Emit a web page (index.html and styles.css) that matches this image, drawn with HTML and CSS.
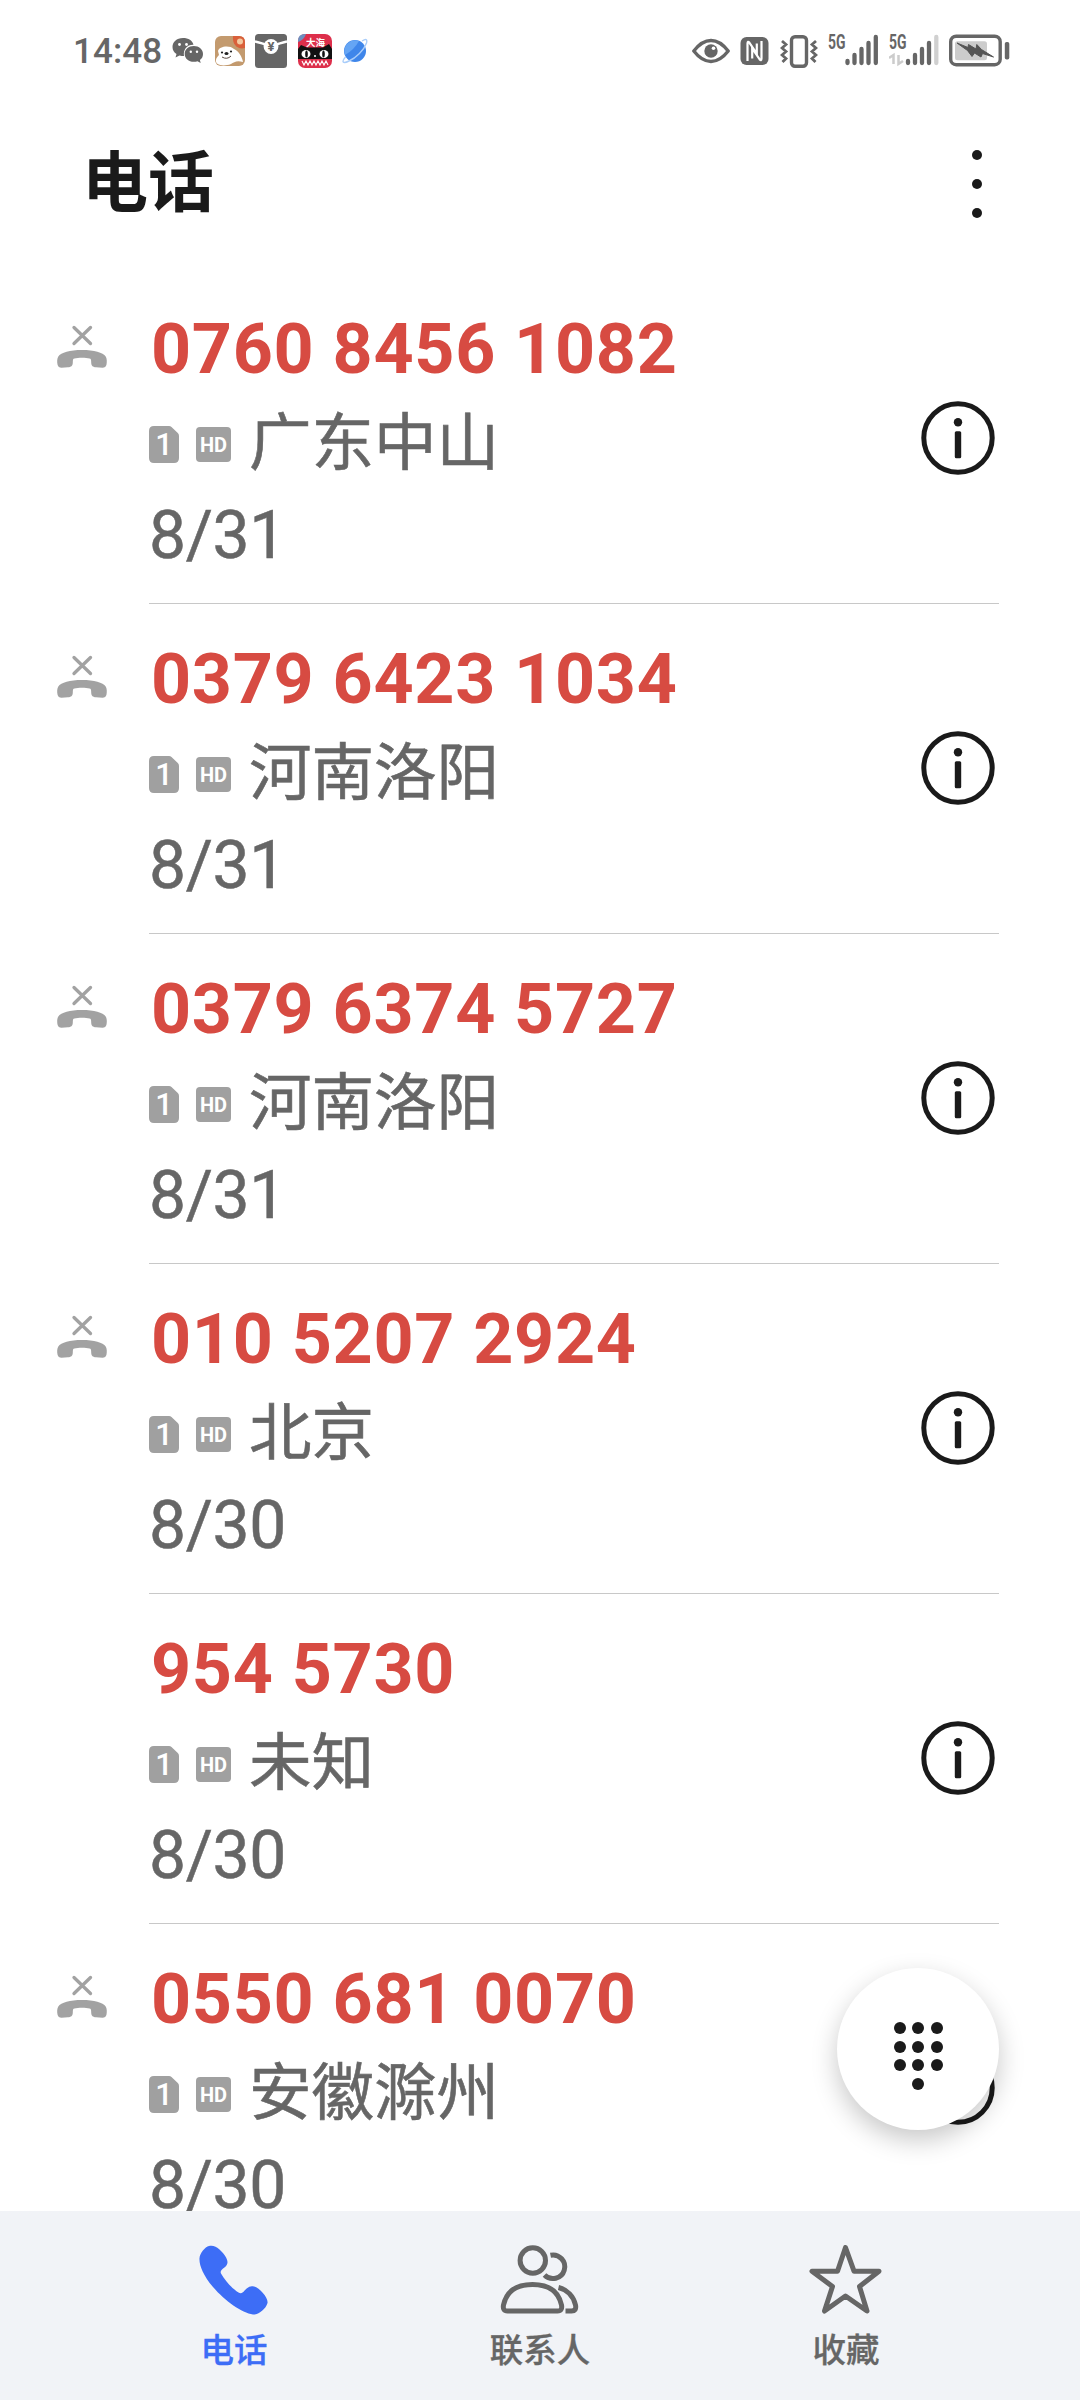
FILE: index.html
```html
<!DOCTYPE html>
<html lang="zh-CN">
<head>
    <meta charset="UTF-8">
    <title>电话</title>
    <link rel="stylesheet" href="styles.css">
</head>
<body>
    <!-- shared icons -->
    <svg class="defs" width="0" height="0">
        <symbol id="missed" viewBox="0 0 50 44">
            <path d="M17 2.500 L33.500 18.500 M33.500 2.500 L17 18.500" fill="none" stroke="#a2a2a2" stroke-width="3.300" stroke-linecap="round"/>
            <path d="M25 25 C13 25 4 27.500 1.300 31.500 C0 33.500 0 37 .5 39.500 C1 42 2.500 42.700 4.500 42.700 L11 42.300 C14.500 42 15.800 40.500 15.800 37.500 C15.800 34.500 16 33.800 17.500 33.500 C21 32.600 29 32.600 32.500 33.500 C34 33.800 34.200 34.500 34.200 37.500 C34.200 40.500 35.500 42 39 42.300 L45.500 42.700 C47.500 42.700 49 42 49.500 39.500 C50 37 50 33.500 48.700 31.500 C46 27.500 37 25 25 25 Z" fill="#a2a2a2"/>
        </symbol>
        <symbol id="sim" viewBox="0 0 30 37">
            <path d="M5 0 H20 Q21.500 0 22.500 1 L28.800 7 Q30 8.200 30 10 V32 Q30 37 25 37 H5 Q0 37 0 32 V5 Q0 0 5 0 Z" fill="#a0a0a0"/>
        </symbol>
        <symbol id="info" viewBox="0 0 74 74">
            <circle cx="37" cy="37" r="34.200" fill="none" stroke="#1a1a1a" stroke-width="5"/>
            <circle cx="37" cy="21.300" r="4.200" fill="#1a1a1a"/>
            <rect x="33.800" y="30.300" width="6.400" height="27" rx="1.500" fill="#1a1a1a"/>
        </symbol>
    </svg>

    <div class="screen">
        <div class="status">
            <span class="time">14:48</span>
            <div class="apps">
                <!-- wechat -->
                <svg width="32" height="36" viewBox="0 0 32 36">
                    <path d="M11 5 C4.500 5 .5 9 .5 14 C.5 17 2 19.500 4.500 21 L3.500 24.500 L7.500 22.500 C9 23 10.500 23 12 23 C11 16.500 15 11.500 21.500 11.700 C20.500 7.500 16.500 5 11 5 Z" fill="#666"/>
                    <path d="M21.800 13 C16.500 13 12.700 16.500 12.700 21 C12.700 25.500 16.500 28.800 21.800 28.800 C23 28.800 24.500 28.600 25.500 28.200 L28.700 30 L27.900 27 C30 25.500 31 23.500 31 21 C31 16.500 27 13 21.800 13 Z" fill="#666"/>
                    <circle cx="7.500" cy="11.500" r="1.400" fill="#fff"/>
                    <circle cx="14.500" cy="11.500" r="1.400" fill="#fff"/>
                    <circle cx="18.800" cy="18.800" r="1.200" fill="#fff"/>
                    <circle cx="25" cy="18.800" r="1.200" fill="#fff"/>
                </svg>
                <!-- puppy -->
                <svg width="30" height="36" viewBox="0 0 30 36">
                    <rect y="3" width="30" height="30" rx="6" fill="#c39a6e"/>
                    <path d="M18 3 H24 Q30 3 30 9 V15 C23 17 17 12 18 3 Z" fill="#d9603a"/>
                    <circle cx="25" cy="8.500" r="3" fill="#f3c9a0"/>
                    <path d="M3 18 C4 13 15 12 19 16 C24 18 27 24 28 29 C22 27 19 29 16 31 C8 34 0 32 1 27 C1 25 3 23 4 22 Z" fill="#fff"/>
                    <circle cx="7" cy="19.500" r="1.100" fill="#222"/>
                    <circle cx="16" cy="18.500" r="1.100" fill="#222"/>
                    <ellipse cx="11.500" cy="20.500" rx="2" ry="1.500" fill="#222"/>
                    <path d="M7 24 Q12 27 16 23" fill="none" stroke="#5b4a42"/>
                </svg>
                <!-- wallet -->
                <svg width="32" height="36" viewBox="0 0 32 36">
                    <rect y="1" width="32" height="34" rx="3.500" fill="#666"/>
                    <path d="M0 8.500 Q8 10.500 12 12 M32 8.500 Q24 10.500 20 12" fill="none" stroke="#fff" stroke-width="2.400"/>
                    <circle cx="16" cy="13.500" r="7.400" fill="#fff"/>
                    <text class="yen" x="16" y="18.200" text-anchor="middle">¥</text>
                </svg>
                <!-- black cat on red -->
                <svg width="34" height="36" viewBox="0 0 34 36">
                    <rect y="1" width="34" height="34" rx="7" fill="#dd2f4b"/>
                    <path d="M0 8 Q0 1 7 1 L8 1 Q6 7 0 9 Z" fill="#6c8fc0"/>
                    <path d="M0 16 L3 12 L9 14.500 H25 L31 11 L34 16 V26 H0 Z" fill="#111"/>
                    <ellipse cx="8" cy="21" rx="4.500" ry="4" fill="#fff"/>
                    <ellipse cx="26" cy="21" rx="4.500" ry="4" fill="#fff"/>
                    <ellipse cx="8.500" cy="21" rx="1.300" ry="3.500" fill="#111"/>
                    <ellipse cx="25.500" cy="21" rx="1.300" ry="3.500" fill="#111"/>
                    <circle cx="17" cy="23" r="1" fill="#fff"/>
                    <text class="tiny" x="17.500" y="12.800" text-anchor="middle">大海</text>
                    <path d="M4 28 l2 4 l2-4 l2 4 l2-4 l2 4 l2-4 l2 4 l2-4 l2 4 l2-4 l2 4 l2-4 l2 4" fill="none" stroke="#fff" stroke-width="1.100"/>
                </svg>
                <!-- browser planet -->
                <svg width="26" height="36" viewBox="0 0 26 36">
                    <circle cx="13" cy="18" r="11" fill="#3f86ea"/>
                    <path d="M3 22 A11 11 0 0 1 17 8 Q12 17 3 22Z" fill="#65a5f4"/>
                    <path d="M3.500 24 C-1 29 1 31 7 28 C14 25 22 17 24.500 10 C25.500 6 24 5.500 20 8" fill="none" stroke="#a9cdfa" stroke-width="1.400"/>
                </svg>
            </div>

            <div class="system">
                <!-- eye -->
                <svg width="38" height="36" viewBox="0 0 38 36">
                    <path d="M1.800 18 C8 10 13 7.500 19 7.500 C25 7.500 30 10 36.200 18 C30 26 25 28.500 19 28.500 C13 28.500 8 26 1.800 18 Z" fill="none" stroke="#666" stroke-width="3.400" stroke-linejoin="round"/>
                    <circle cx="19" cy="18" r="6.700" fill="#666"/>
                    <circle cx="21.500" cy="15.300" r="1.800" fill="#fff"/>
                </svg>
                <!-- nfc -->
                <svg width="29" height="36" viewBox="0 0 29 36">
                    <rect x=".5" y="4" width="28" height="28" rx="6" fill="#666"/>
                    <path d="M7.500 28 V10.500 Q7.500 7.500 9.500 9.800 L16.800 20.500 V10.500" fill="none" stroke="#fff" stroke-width="2.200"/>
                    <path d="M21.500 8 V25.500 Q21.500 28.500 19.500 26.200 L12.200 15.500 V25.500" fill="none" stroke="#fff" stroke-width="2.200"/>
                </svg>
                <!-- vibrate -->
                <svg width="38" height="36" viewBox="0 0 38 36">
                    <rect x="11.500" y="3.700" width="15" height="29.500" rx="3.500" fill="none" stroke="#666" stroke-width="3.400"/>
                    <path d="M2 8 L6 11.500 L2 15 L6 18.500 L2 22 L6 25.500 L2.500 29 M36 8 L32 11.500 L36 15 L32 18.500 L36 22 L32 25.500 L35.500 29" fill="none" stroke="#666" stroke-width="2.800"/>
                </svg>
                <!-- signal, sim 1 -->
                <svg width="50" height="36" viewBox="0 0 50 36">
                    <text class="net" x="0" y="15.500" textLength="17.500" lengthAdjust="spacingAndGlyphs">5G</text>
                    <path d="M19.500 28 V30 M26.500 22 V30 M33.500 16 V30 M40.500 10 V30 M47.800 4 V30" stroke="#666" stroke-width="4.300" stroke-linecap="round"/>
                </svg>
                <!-- signal, sim 2 -->
                <svg width="50" height="36" viewBox="0 0 50 36">
                    <text class="net" x="0" y="15.500" textLength="17.500" lengthAdjust="spacingAndGlyphs">5G</text>
                    <path d="M0 25 L4.500 22 V31 M14 28 L9.500 31 V22" fill="none" stroke="#ccc" stroke-width="2.500"/>
                    <path d="M19 28 V30 M26 22 V30 M33 16 V30 M40 10 V30" stroke="#666" stroke-width="4.300" stroke-linecap="round"/>
                    <path d="M47.300 4 V30" stroke="#d0d0d0" stroke-width="4.300" stroke-linecap="round"/>
                </svg>
                <!-- battery -->
                <svg width="61" height="36" viewBox="0 0 61 36">
                    <rect x="1.700" y="3.200" width="49.500" height="28.500" rx="5.500" fill="none" stroke="#666" stroke-width="3.400"/>
                    <rect x="6" y="8.200" width="32" height="19" rx="2.500" fill="#ccc"/>
                    <path d="M8 10 L19 14.500 L19.500 11.500 L27 16 L27.800 11.500 L32.500 16.500 L44.500 24 L33.500 20.500 L32 24 L25.500 20 L23 23.500 L18.500 17.500 Z" fill="#555" stroke="#555"/>
                    <rect x="55.800" y="9" width="4.500" height="17.500" rx="1.800" fill="#666"/>
                </svg>
            </div>
        </div>

        <div class="header">
            <h1>电话</h1>
            <div class="more"><i></i><i></i><i></i></div>
        </div>

        <div class="calls">
            <div class="call">
                <div class="type"><svg class="missed"><use href="#missed"/></svg></div>
                <div class="detail">
                    <div class="text">
                        <div class="number">0760 8456 1082</div>
                        <div class="place"><span class="sim"><svg><use href="#sim"/></svg><b>1</b></span><span class="hd">HD</span>广东中山</div>
                        <div class="date">8/31</div>
                    </div>
                    <svg class="info"><use href="#info"/></svg>
                </div>
            </div>
            <div class="call">
                <div class="type"><svg class="missed"><use href="#missed"/></svg></div>
                <div class="detail">
                    <div class="text">
                        <div class="number">0379 6423 1034</div>
                        <div class="place"><span class="sim"><svg><use href="#sim"/></svg><b>1</b></span><span class="hd">HD</span>河南洛阳</div>
                        <div class="date">8/31</div>
                    </div>
                    <svg class="info"><use href="#info"/></svg>
                </div>
            </div>
            <div class="call">
                <div class="type"><svg class="missed"><use href="#missed"/></svg></div>
                <div class="detail">
                    <div class="text">
                        <div class="number">0379 6374 5727</div>
                        <div class="place"><span class="sim"><svg><use href="#sim"/></svg><b>1</b></span><span class="hd">HD</span>河南洛阳</div>
                        <div class="date">8/31</div>
                    </div>
                    <svg class="info"><use href="#info"/></svg>
                </div>
            </div>
            <div class="call">
                <div class="type"><svg class="missed"><use href="#missed"/></svg></div>
                <div class="detail">
                    <div class="text">
                        <div class="number">010 5207 2924</div>
                        <div class="place"><span class="sim"><svg><use href="#sim"/></svg><b>1</b></span><span class="hd">HD</span>北京</div>
                        <div class="date">8/30</div>
                    </div>
                    <svg class="info"><use href="#info"/></svg>
                </div>
            </div>
            <div class="call">
                <div class="type"></div>
                <div class="detail">
                    <div class="text">
                        <div class="number">954 5730</div>
                        <div class="place"><span class="sim"><svg><use href="#sim"/></svg><b>1</b></span><span class="hd">HD</span>未知</div>
                        <div class="date">8/30</div>
                    </div>
                    <svg class="info"><use href="#info"/></svg>
                </div>
            </div>
            <div class="call">
                <div class="type"><svg class="missed"><use href="#missed"/></svg></div>
                <div class="detail">
                    <div class="text">
                        <div class="number">0550 681 0070</div>
                        <div class="place"><span class="sim"><svg><use href="#sim"/></svg><b>1</b></span><span class="hd">HD</span>安徽滁州</div>
                        <div class="date">8/30</div>
                    </div>
                    <svg class="info"><use href="#info"/></svg>
                </div>
            </div>
        </div>

        <div class="dialpad">
            <i></i><i></i><i></i>
            <i></i><i></i><i></i>
            <i></i><i></i><i></i>
            <i class="last"></i>
        </div>

        <div class="tabs">
            <div class="tab active">
                <svg viewBox="0 0 80 70">
                    <path d="M11 1 C7 2 2 8 1.500 13 C1 20 5 30 15 42 C27 56 44 68 55 69.500 C60 70 68 64 69.500 58 C70.500 53 62 43 56 41.500 C50 40 48 45 44.500 47.500 C43.500 48.500 42 48.500 40.500 47.500 C34 43.500 27 35.500 23 28.500 C22.300 27 22.700 25.800 24 24.500 C27 22 29.500 20.500 29.500 17 C29.500 12 22 4 17.500 1.800 C15.500 .8 13.500 .4 11 1 Z" fill="#3d6df6"/>
                </svg>
                <span>电话</span>
            </div>
            <div class="tab">
                <svg viewBox="0 0 80 70">
                    <g fill="none" stroke="#666" stroke-width="5" stroke-linejoin="round">
                        <circle cx="32.800" cy="15.500" r="12.700"/>
                        <path d="M50.500 10.200 A11.800 11.800 0 1 1 44.500 30"/>
                        <path d="M32.500 39.500 C16 39.500 6.500 46 3.500 60 C2.800 64 4 66 7.500 66 H57.500 C61 66 62.200 64 61.500 60 C58.500 46 49 39.500 32.500 39.500 Z"/>
                        <path d="M58.500 42.500 C67 44.500 73.500 51 75.500 60 C76.300 64 75 66 71.500 66 H65.500"/>
                    </g>
                </svg>
                <span>联系人</span>
            </div>
            <div class="tab">
                <svg viewBox="0 0 80 70">
                    <path d="M39.500 2.500 L48 26.200 H73 L53.500 41.500 L61 66 L39.500 51 L18.500 66 L26.500 41.500 L6 26.200 H31.500 Z" fill="none" stroke="#666" stroke-width="5" stroke-linejoin="round"/>
                </svg>
                <span>收藏</span>
            </div>
        </div>
    </div>
</body>
</html>
```

FILE: styles.css
```css
* {
    box-sizing: border-box;
}
body {
    margin: 0;
    background: #fff;
    color: #1a1a1a;
    font-family: Roboto, 'Noto Sans CJK SC', sans-serif;
}
svg {
    display: block;
    flex: none;
}
.defs {
    position: absolute;
}
.screen {
    position: relative;
    display: flex;
    flex-direction: column;
    width: 1080px;
    height: 2400px;
    overflow: hidden;
}

/* status bar */
.status {
    display: flex;
    align-items: center;
    height: 102px;
    padding: 0 70px 0 73px;
    color: #666;
}
.time {
    width: 99px;
    font-size: 35px;
    font-weight: 500;
    letter-spacing: 0.1px;
}
.apps {
    display: flex;
    gap: 10.500px;
}
.system {
    display: flex;
    gap: 10.500px;
    margin-left: auto;
}
.yen {
    font-size: 13px;
    font-weight: 700;
    fill: #666;
}
.tiny {
    font-size: 9.500px;
    font-weight: 700;
    fill: #fff;
}
.net {
    font-size: 19.500px;
    font-weight: 700;
    fill: #666;
}

/* title */
.header {
    display: flex;
    justify-content: space-between;
    align-items: center;
    height: 172px;
    padding: 0 98px 8px 82px;
}
.header h1 {
    margin: 0;
    font-size: 66px;
    font-weight: 700;
    line-height: 90px;
}
.more {
    display: grid;
    gap: 18.500px;
}
.more i {
    width: 10.200px;
    height: 10.200px;
    border-radius: 50%;
    background: #1a1a1a;
}

/* call log */
.calls {
    flex: 1;
    min-height: 0;
    overflow: hidden;
}
.call {
    display: flex;
    height: 330px;
}
.type {
    width: 149px;
    padding: 51px 0 0 57px;
}
.missed {
    width: 50px;
    height: 44px;
}
.detail {
    display: flex;
    flex: 1;
    justify-content: space-between;
    margin-right: 81px;
    padding-right: 4px;
    border-bottom: 1px solid #c8c8c8;
}
.text {
    padding-top: 33px;
}
.number {
    padding-left: 2px;
    color: #d74b42;
    font-size: 70px;
    font-weight: 700;
    line-height: 84px;
    letter-spacing: 0.7px;
}
.place {
    display: flex;
    align-items: center;
    height: 106px;
    color: #666;
    font-size: 62.500px;
    line-height: 106px;
    -webkit-text-stroke: 0.6px #666;
}
.date {
    padding-top: 1px;
    color: #666;
    font-size: 66px;
    line-height: 76px;
    letter-spacing: -0.4px;
    -webkit-text-stroke: 0.5px #666;
}
.sim,
.hd {
    -webkit-text-stroke: 0;
}
.sim {
    display: grid;
    margin-right: 17px;
    line-height: 37px;
}
.sim svg,
.sim b {
    grid-area: 1 / 1;
    width: 30px;
    height: 37px;
}
.sim b {
    color: #fff;
    font-size: 31px;
    font-weight: 500;
    text-align: center;
}
.hd {
    width: 35px;
    height: 35px;
    margin-right: 18px;
    border-radius: 4px;
    background: #a0a0a0;
    color: #fff;
    font-size: 20px;
    font-weight: 700;
    line-height: 36px;
    text-align: center;
}
.info {
    width: 74px;
    height: 74px;
    margin-top: 127px;
}

/* floating dial button */
.dialpad {
    position: absolute;
    left: 837px;
    top: 1968px;
    display: grid;
    grid-template-columns: repeat(3, 12px);
    grid-auto-rows: 12px;
    gap: 6.500px;
    width: 162px;
    height: 162px;
    padding: 54px 0 0 56.500px;
    border-radius: 50%;
    background: #fff;
    box-shadow: 0 10px 26px rgba(0, 0, 0, 0.22);
}
.dialpad i {
    border-radius: 50%;
    background: #1a1a1a;
}
.dialpad .last {
    grid-column: 2;
}

/* bottom tabs */
.tabs {
    display: flex;
    height: 189px;
    padding: 34px 81px 0;
    background: #f1f3f7;
}
.tab {
    display: flex;
    flex: 1;
    flex-direction: column;
    align-items: center;
    color: #666;
    font-size: 33.500px;
    font-weight: 500;
    line-height: 50px;
    -webkit-text-stroke: 0.3px;
}
.tab svg {
    width: 80px;
    height: 70px;
    margin-bottom: 11px;
}
.active {
    color: #3d6df6;
}
.active svg {
    margin-left: 8px;
}
```
